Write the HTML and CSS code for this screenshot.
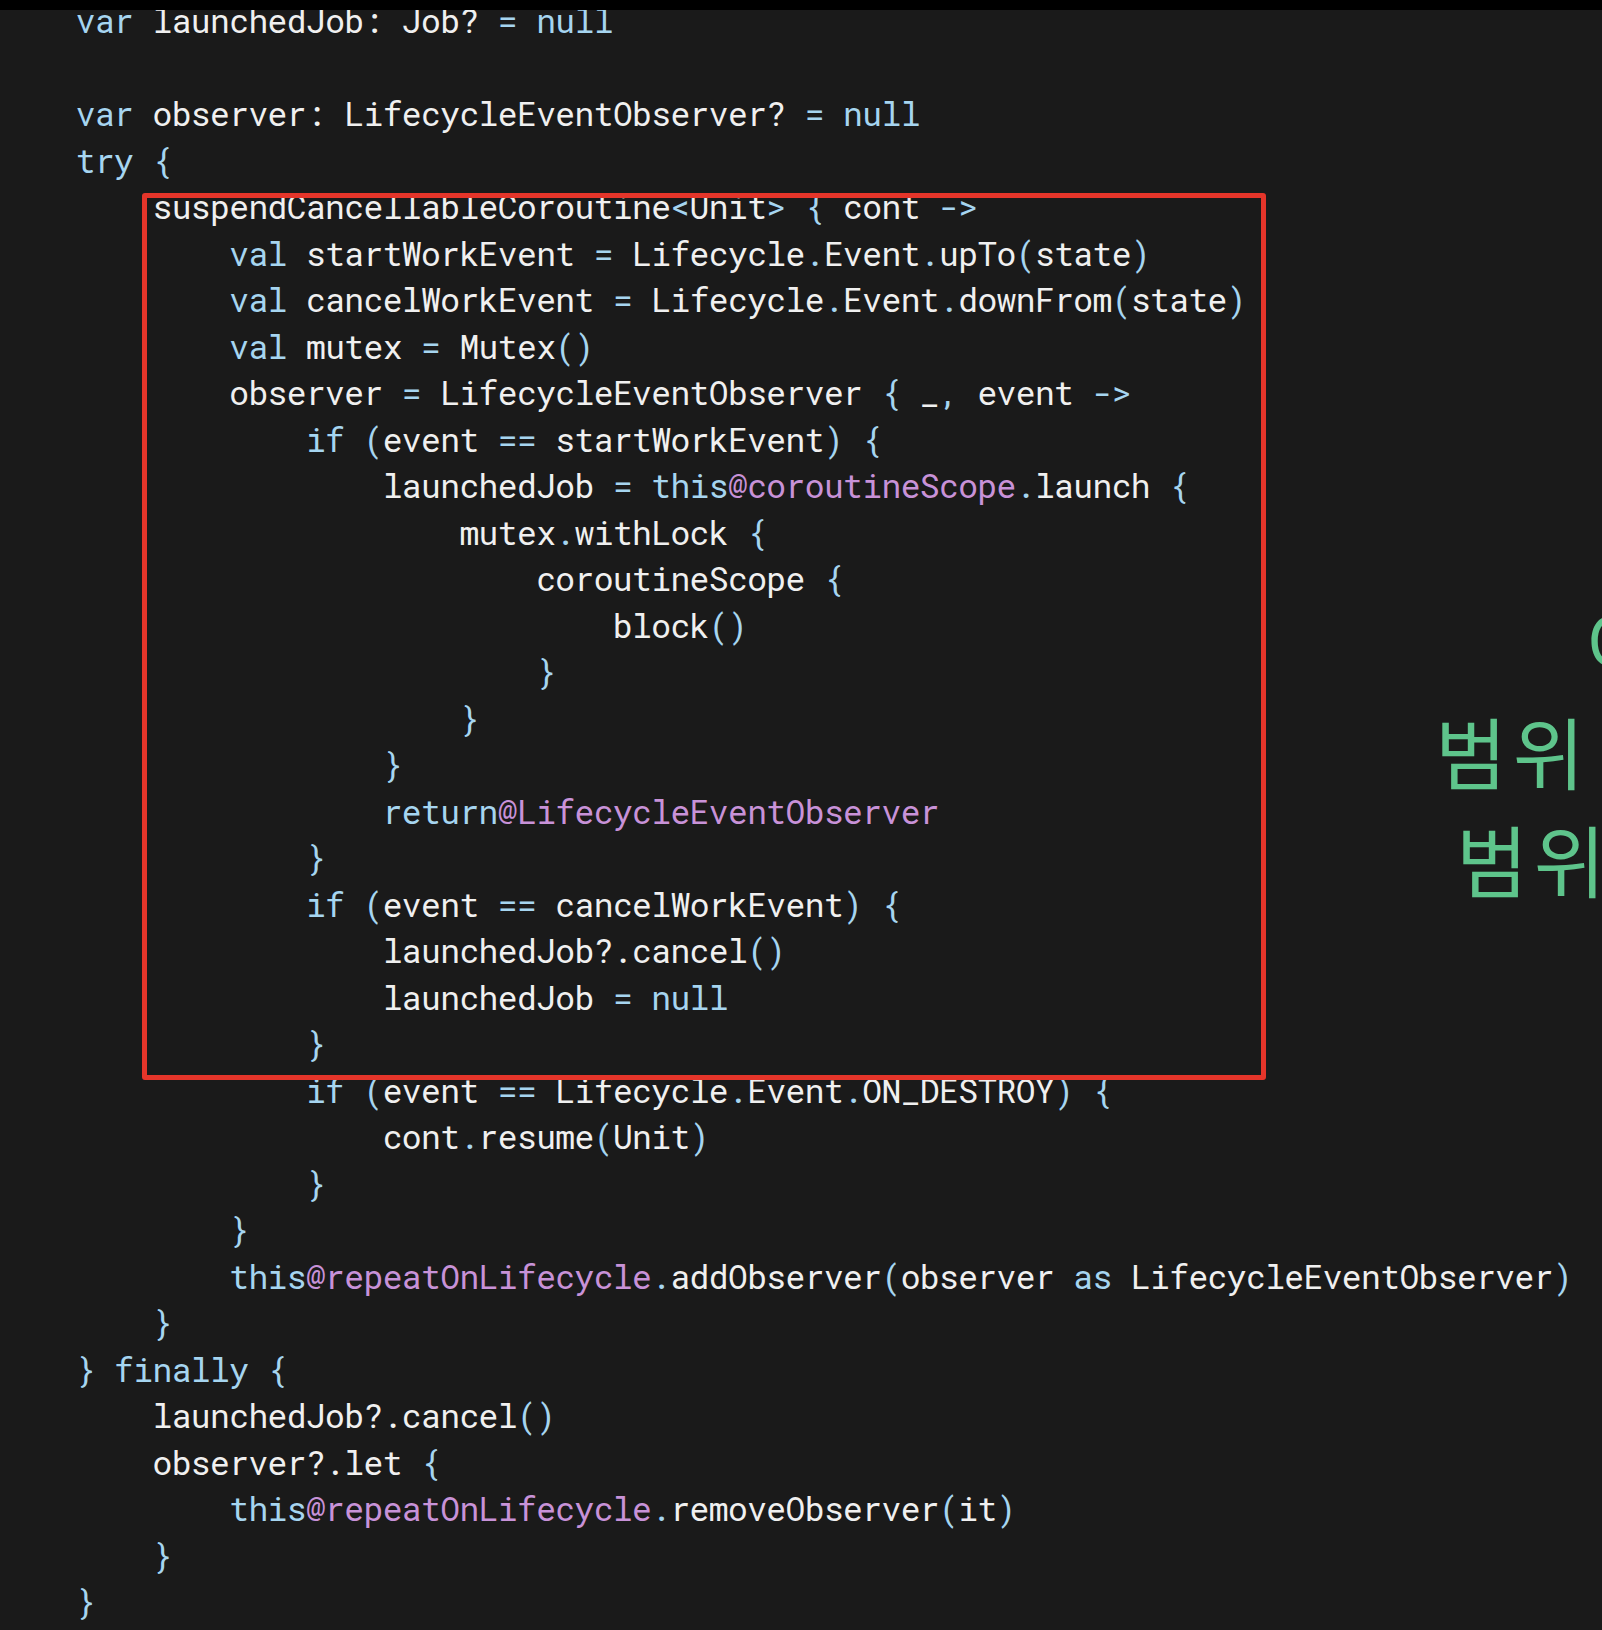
FILE: index.html
```html
<!DOCTYPE html>
<html lang="ko">
<head>
    <meta charset="UTF-8">
    <title>repeatOnLifecycle</title>
    <link rel="stylesheet" href="styles.css">
</head>
<body>
    <div class="top-bar"></div>

    <pre class="code">    <span class="kw">var</span> launchedJob: Job? <span class="p">=</span> <span class="kw">null</span>

    <span class="kw">var</span> observer: LifecycleEventObserver? <span class="p">=</span> <span class="kw">null</span>
    <span class="kw">try</span> <span class="p">{</span>
        suspendCancellableCoroutine<span class="p">&lt;</span>Unit<span class="p">&gt;</span> <span class="p">{</span> cont <span class="p">-&gt;</span>
            <span class="kw">val</span> startWorkEvent <span class="p">=</span> Lifecycle<span class="p">.</span>Event<span class="p">.</span>upTo<span class="p">(</span>state<span class="p">)</span>
            <span class="kw">val</span> cancelWorkEvent <span class="p">=</span> Lifecycle<span class="p">.</span>Event<span class="p">.</span>downFrom<span class="p">(</span>state<span class="p">)</span>
            <span class="kw">val</span> mutex <span class="p">=</span> Mutex<span class="p">()</span>
            observer <span class="p">=</span> LifecycleEventObserver <span class="p">{</span> _<span class="p">,</span> event <span class="p">-&gt;</span>
                <span class="kw">if</span> <span class="p">(</span>event <span class="p">==</span> startWorkEvent<span class="p">)</span> <span class="p">{</span>
                    launchedJob <span class="p">=</span> <span class="kw">this</span><span class="lb">@coroutineScope</span><span class="p">.</span>launch <span class="p">{</span>
                        mutex<span class="p">.</span>withLock <span class="p">{</span>
                            coroutineScope <span class="p">{</span>
                                block<span class="p">()</span>
                            <span class="p">}</span>
                        <span class="p">}</span>
                    <span class="p">}</span>
                    <span class="kw">return</span><span class="lb">@LifecycleEventObserver</span>
                <span class="p">}</span>
                <span class="kw">if</span> <span class="p">(</span>event <span class="p">==</span> cancelWorkEvent<span class="p">)</span> <span class="p">{</span>
                    launchedJob?.cancel<span class="p">()</span>
                    launchedJob <span class="p">=</span> <span class="kw">null</span>
                <span class="p">}</span>
                <span class="kw">if</span> <span class="p">(</span>event <span class="p">==</span> Lifecycle<span class="p">.</span>Event<span class="p">.</span>ON_DESTROY<span class="p">)</span> <span class="p">{</span>
                    cont<span class="p">.</span>resume<span class="p">(</span>Unit<span class="p">)</span>
                <span class="p">}</span>
            <span class="p">}</span>
            <span class="kw">this</span><span class="lb">@repeatOnLifecycle</span><span class="p">.</span>addObserver<span class="p">(</span>observer <span class="kw">as</span> LifecycleEventObserver<span class="p">)</span>
        <span class="p">}</span>
    <span class="p">}</span> <span class="kw">finally</span> <span class="p">{</span>
        launchedJob?.cancel<span class="p">()</span>
        observer?.let <span class="p">{</span>
            <span class="kw">this</span><span class="lb">@repeatOnLifecycle</span><span class="p">.</span>removeObserver<span class="p">(</span>it<span class="p">)</span>
        <span class="p">}</span>
    <span class="p">}</span></pre>

    <!-- 코드 위에 겹쳐진 강조 박스 -->
    <div class="highlight-box"></div>

    <!-- 오른쪽 주석 (화면 밖으로 잘림) -->
    <div class="note">
        <div class="note-line note-line-1">이</div>
        <div class="note-line note-line-2">범위</div>
        <div class="note-line note-line-3">범위</div>
    </div>
</body>
</html>
```

FILE: styles.css
```css
:root {
    --bg-color: #1a1a1a;
    --text-color: #f0f0f0;
    --keyword-color: #a6d5f0;
    --label-color: #c892d8;
    --box-color: #e5352a;
    --note-color: #5ec48b;
}
html,
body {
    overflow: hidden;
}
body {
    margin: 0;
    padding: 0;
    width: 1602px;
    height: 1630px;
    position: relative;
    background-color: var(--bg-color);
    color: var(--text-color);
}
.top-bar {
    height: 10px;
    background-color: #000;
    position: relative;
    z-index: 2;
}
.code {
    margin: -13px 0 0 -1px;
    padding: 0;
    font-family: "Roboto Mono", "DejaVu Sans Mono", monospace;
    font-size: 33px;
    letter-spacing: -0.62px;
    line-height: 46.5px;
    color: var(--text-color);
    white-space: pre;
}
.kw,
.p {
    color: var(--keyword-color);
}
.lb {
    color: var(--label-color);
}
.highlight-box {
    position: absolute;
    left: 142px;
    top: 193px;
    width: 1114px;
    height: 877px;
    border: 5.5px solid var(--box-color);
    border-radius: 3px;
}
.note {
    position: absolute;
    left: 0;
    top: 588px;
    width: 1602px;
    font-family: "Noto Sans CJK KR", sans-serif;
    font-weight: 400;
    font-size: 78px;
    letter-spacing: 6px;
    line-height: 108px;
    color: var(--note-color);
    white-space: nowrap;
}
.note-line-1 {
    padding-left: 1585px;
}
.note-line-2 {
    padding-left: 1435px;
}
.note-line-3 {
    padding-left: 1456px;
}
```
